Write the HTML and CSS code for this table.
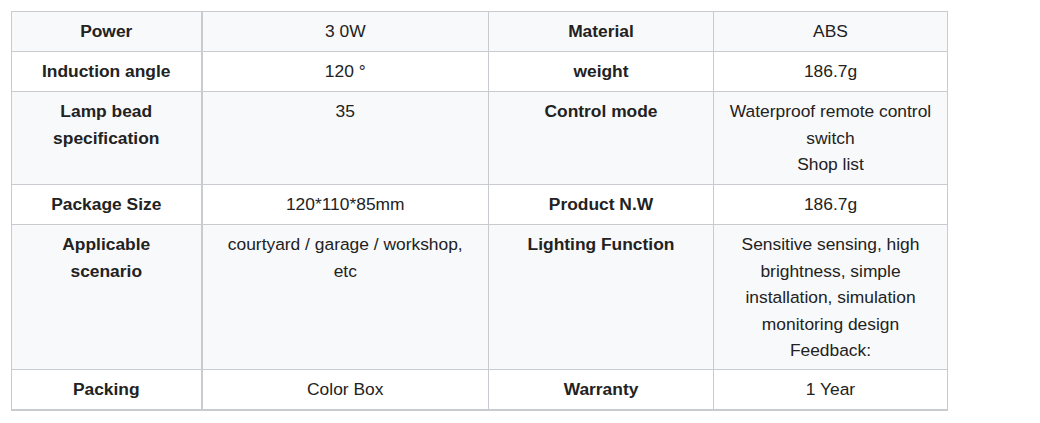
FILE: index.html
```html
<!DOCTYPE html>
<html>
<head>
<meta charset="utf-8">
<link rel="stylesheet" href="styles.css">
</head>
<body>
<table class="spec">
  <colgroup>
    <col class="c1"><col class="c2"><col class="c3"><col class="c4">
  </colgroup>
  <tbody>
    <tr class="alt">
      <th>Power</th><td>3 0W</td><th>Material</th><td>ABS</td>
    </tr>
    <tr>
      <th>Induction angle</th><td>120 °</td><th>weight</th><td>186.7g</td>
    </tr>
    <tr class="alt">
      <th>Lamp bead<br>specification</th><td>35</td><th>Control mode</th><td>Waterproof remote control switch<br>Shop list</td>
    </tr>
    <tr>
      <th>Package Size</th><td>120*110*85mm</td><th>Product N.W</th><td>186.7g</td>
    </tr>
    <tr class="alt tall">
      <th>Applicable<br>scenario</th><td>courtyard / garage / workshop,<br>etc</td><th>Lighting Function</th><td>Sensitive sensing, high brightness, simple installation, simulation monitoring design<br>Feedback:</td>
    </tr>
    <tr>
      <th>Packing</th><td>Color Box</td><th>Warranty</th><td>1 Year</td>
    </tr>
  </tbody>
</table>
</body>
</html>
```
FILE: styles.css
```css
html, body {
  margin: 0;
  padding: 0;
  background: #ffffff;
}
body {
  padding: 11px 0 0 11px;
  font-family: "Liberation Sans", Arial, sans-serif;
  color: #222222;
}
.spec {
  border-collapse: collapse;
  width: 936px;
  table-layout: fixed;
  font-size: 17.4px;
  line-height: 26.5px;
  border: 1px solid #c8ccd1;
  border-bottom-width: 2px;
}
.c1 { width: 190px; }
.c2 { width: 287px; }
.c3 { width: 225px; }
.c4 { width: 234px; }
.spec th, .spec td {
  border: 1px solid #c8ccd1;
  padding: 6px 10px 6.5px;
  text-align: center;
  vertical-align: top;
}
.spec tr.tall th, .spec tr.tall td {
  padding-bottom: 5.5px;
}
.spec th {
  font-weight: bold;
}
.spec td {
  font-weight: normal;
}
.spec tr.alt th, .spec tr.alt td {
  background: #f8f9fa;
}
.spec th:first-child {
  border-right-width: 2px;
}
```
